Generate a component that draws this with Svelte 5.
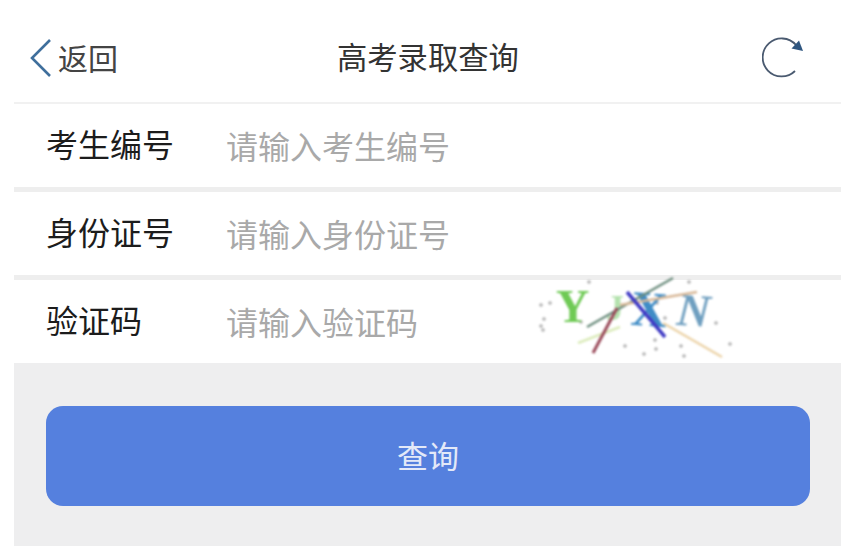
<script lang="ts">
	const fields = [
		{ label: '考生编号', hint: '请输入考生编号' },
		{ label: '身份证号', hint: '请输入身份证号' },
		{ label: '验证码', hint: '请输入验证码', captcha: true }
	];

	// noise specks on the captcha, coordinates in captcha box
	const specks = [
		[21, 35], [30, 33], [24, 49], [21, 56], [23, 60], [69, 12], [61, 52], [105, 76], [124, 84],
		[135, 70], [136, 79], [161, 76], [164, 86], [169, 12], [196, 53], [210, 74], [145, 48], [137, 33]
	];
</script>

<div class="page">
	<header class="nav">
		<div class="back">
			<svg class="chevron" width="26" height="40" viewBox="0 0 26 40" aria-hidden="true">
				<path d="M22 2 L4 20 L22 38" fill="none" stroke="#3f6f9c" stroke-width="2.6" />
			</svg>
			<span>返回</span>
		</div>
		<div class="title">高考录取查询</div>
		<svg class="refresh" width="44" height="44" viewBox="0 0 44 44" aria-hidden="true">
			<path d="M33 35 A19 19 0 1 1 34 9" fill="none" stroke="#4a5a70" stroke-width="1.8" />
			<path d="M29.5 12.5 L41 15 L37 4.5 Z" fill="#2f5680" />
		</svg>
	</header>

	{#each fields as field}
		<div class="row" class:last={field.captcha}>
			<div class="label">{field.label}</div>
			<div class="hint">{field.hint}</div>
			{#if field.captcha}
				<svg class="captcha" width="230" height="90" viewBox="0 0 230 90" aria-hidden="true">
					{#each specks as [x, y]}
						<circle cx={x} cy={y} r="1.8" fill="#8f8f8f" opacity="0.7" />
					{/each}
					<text x="36" y="52" class="glyph" fill="#6fca55" font-size="46">Y</text>
					<text x="86" y="50" class="glyph" fill="#b4e2ae" font-size="36">J</text>
					<text x="111" y="56" class="glyph" fill="#3f8cc6" font-size="50" transform="rotate(4 130 40)">X</text>
					<text x="157" y="56" class="glyph italic" fill="#6f9fc0" font-size="46" transform="rotate(4 175 40)">N</text>
					<line x1="58" y1="73" x2="100" y2="57" stroke="#dcecbc" stroke-width="2.5" />
					<line x1="67" y1="57" x2="153" y2="8" stroke="#6f8f80" stroke-width="2.5" />
					<line x1="73" y1="83" x2="97" y2="38" stroke="#9a4a5a" stroke-width="3" />
					<line x1="100" y1="35" x2="177" y2="22" stroke="#d8b898" stroke-width="2.5" />
					<line x1="143" y1="53" x2="202" y2="87" stroke="#ecd3a8" stroke-width="2.5" />
					<line x1="107" y1="22" x2="145" y2="67" stroke="#3f3ac4" stroke-width="3.5" />
				</svg>
			{/if}
		</div>
	{/each}

	<div class="actions">
		<button class="submit" type="button"><span>查询</span></button>
	</div>
</div>

<style>
	:global(body) {
		margin: 0;
		background: #fff;
	}

	.page {
		width: 841px;
		height: 546px;
		box-sizing: border-box;
		padding-left: 14px;
		overflow: hidden;
		display: flex;
		flex-direction: column;
		font-family: 'Noto Sans CJK SC', 'Liberation Sans', sans-serif;
	}

	.nav {
		height: 104px;
		flex: none;
		box-sizing: border-box;
		border-bottom: 2px solid #f1f1f1;
		display: flex;
		align-items: center;
		justify-content: space-between;
		padding: 12px 35px 0 14px;
		position: relative;
	}

	.back {
		display: flex;
		align-items: center;
		gap: 4px;
		font-size: 30px;
		color: #444;
		margin-top: 2px;
	}

	.back span {
		margin-top: -3px;
	}

	.chevron {
		display: block;
	}

	.title {
		position: absolute;
		left: 323px;
		top: 36px;
		line-height: 40px;
		font-size: 30.3px;
		color: #333;
	}

	.refresh {
		margin-top: 2px;
	}

	.row {
		height: 88px;
		flex: none;
		box-sizing: border-box;
		border-bottom: 5px solid #eeeeee;
		display: flex;
		align-items: center;
		padding-left: 32px;
		position: relative;
	}

	.row.last {
		height: 83px;
		border-bottom: 0;
	}

	.label {
		width: 180px;
		flex: none;
		font-size: 32px;
		color: #1c1c1c;
		margin-top: -6px;
	}

	.hint {
		font-size: 32px;
		color: #a9a9a9;
		margin-top: -2px;
	}

	.captcha {
		position: absolute;
		left: 506px;
		top: -10px;
		filter: blur(0.9px);
	}

	.glyph {
		font-family: 'Liberation Serif', serif;
		font-weight: 700;
	}

	.italic {
		font-style: italic;
	}

	.actions {
		flex: 1;
		background: #eeeeef;
		padding: 43px 31px 0 32px;
	}

	.submit {
		display: block;
		width: 100%;
		height: 100px;
		padding: 0 0 4px;
		border: 0;
		border-radius: 17px;
		background: #5580de;
		color: #e3e9f8;
		font-family: inherit;
		font-size: 31px;
	}
</style>
